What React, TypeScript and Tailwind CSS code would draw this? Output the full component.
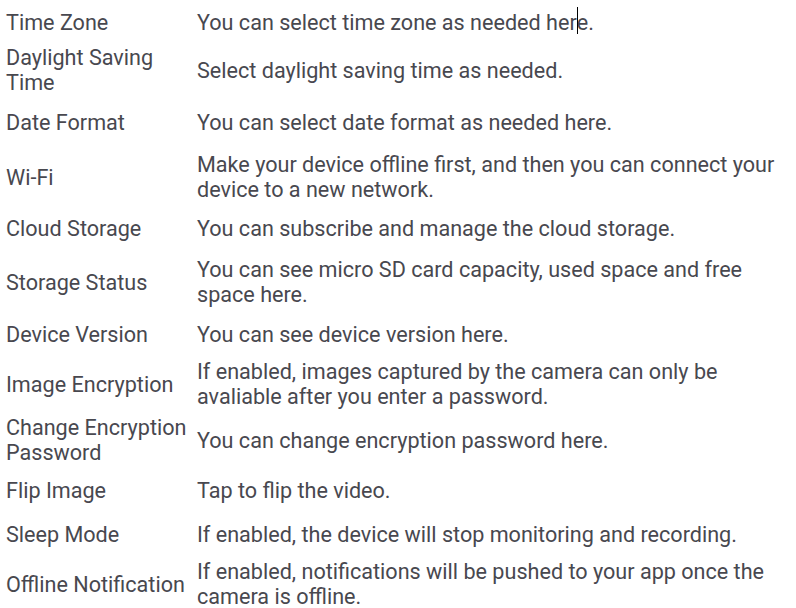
import React from "react";

type Row = { name: string[]; desc: React.ReactNode; mt: string };

const rows: Row[] = [
  {
    name: ["Time Zone"],
    desc: (
      <>
        You can select time zone as needed her
        <span className="relative">
          <span className="absolute left-0 top-[-3px] h-[27px] w-px bg-black" />
          e
        </span>
        .
      </>
    ),
    mt: "mt-[10px]",
  },
  { name: ["Daylight Saving", "Time"], desc: "Select daylight saving time as needed.", mt: "mt-[10px]" },
  { name: ["Date Format"], desc: "You can select date format as needed here.", mt: "mt-[15px]" },
  {
    name: ["Wi-Fi"],
    desc: "Make your device offline first, and then you can connect your device to a new network.",
    mt: "mt-[17px]",
  },
  { name: ["Cloud Storage"], desc: "You can subscribe and manage the cloud storage.", mt: "mt-[14px]" },
  {
    name: ["Storage Status"],
    desc: "You can see micro SD card capacity, used space and free space here.",
    mt: "mt-[16px]",
  },
  { name: ["Device Version"], desc: "You can see device version here.", mt: "mt-[15px]" },
  {
    name: ["Image Encryption"],
    desc: "If enabled, images captured by the camera can only be avaliable after you enter a password.",
    mt: "mt-[12px]",
  },
  {
    name: ["Change Encryption", "Password"],
    desc: "You can change encryption password here.",
    mt: "mt-[6px]",
  },
  { name: ["Flip Image"], desc: "Tap to flip the video.", mt: "mt-[13px]" },
  { name: ["Sleep Mode"], desc: "If enabled, the device will stop monitoring and recording.", mt: "mt-[19px]" },
  {
    name: ["Offline Notification"],
    desc: "If enabled, notifications will be pushed to your app once the camera is offline.",
    mt: "mt-[12px]",
  },
];

export default function App() {
  return (
    <div
      className="w-[796px] h-[608px] overflow-hidden bg-white text-[#48484f] text-[21.6px] leading-[25px]"
      style={{ fontFamily: "Roboto, 'Noto Sans', sans-serif" }}
    >
      {rows.map((r, i) => (
        <div key={i} className={`flex items-center ${r.mt}`}>
          <div className="w-[197px] shrink-0 pl-[6px] pr-[4px]">
            {r.name.map((n, j) => (
              <div key={j}>{n}</div>
            ))}
          </div>
          <div className="flex-1 pr-[4px]">{r.desc}</div>
        </div>
      ))}
    </div>
  );
}
